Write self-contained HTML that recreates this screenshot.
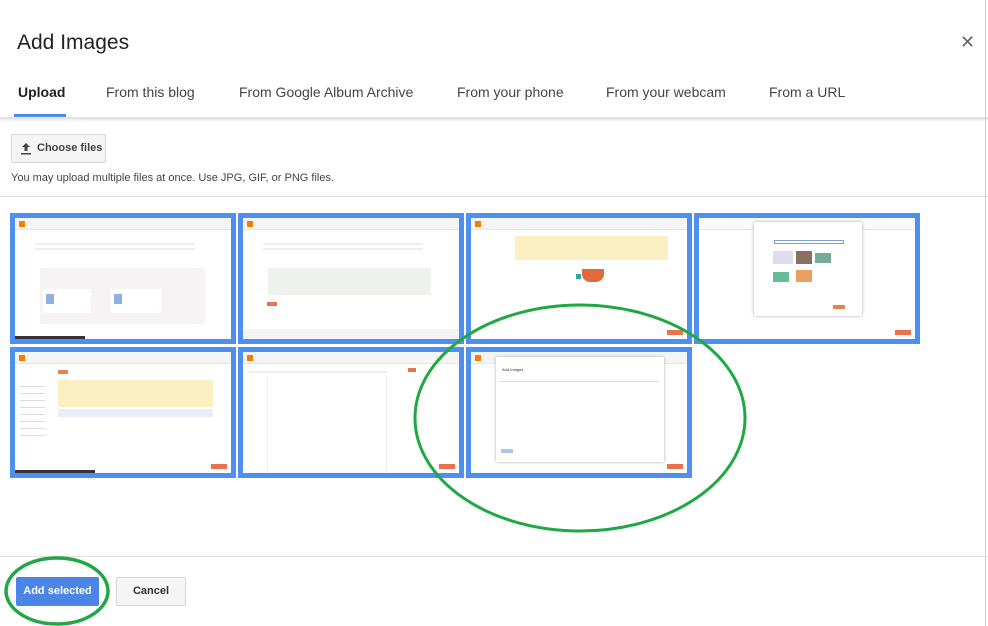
<!DOCTYPE html>
<html><head><style>
*{margin:0;padding:0;box-sizing:border-box}
body{width:988px;height:626px;background:#fff;font-family:"Liberation Sans",Arial,sans-serif;position:relative;overflow:hidden;color:#222}
.abs{position:absolute}
.title{left:17px;top:31px;font-size:21px;color:#222}
.x{left:960px;top:32px;font-size:18px;color:#666}
.tab{top:84px;font-size:14px;color:#444;white-space:nowrap}
.tile{position:absolute;width:226px;height:131px;background:#4f8ff0;padding:5px}
.in{width:100%;height:100%;background:#fff;position:relative;overflow:hidden}
.bar{position:absolute;left:0;top:0;right:0;height:12px;background:#f5f5f5;border-bottom:1px solid #e6e6e6}
.logo{position:absolute;left:4px;top:3px;width:6px;height:6px;background:#f57d00}
.line{position:absolute;height:2px;background:#ddd}
.or{position:absolute;width:16px;height:5px;background:#e8734e;right:4px;bottom:4px}
</style></head><body>
<div class="abs title">Add Images</div>
<div class="abs x">✕</div>
<div class="abs tab" style="left:18px;font-weight:bold;color:#222">Upload</div>
<div class="abs tab" style="left:106px">From this blog</div>
<div class="abs tab" style="left:239px">From Google Album Archive</div>
<div class="abs tab" style="left:457px">From your phone</div>
<div class="abs tab" style="left:606px">From your webcam</div>
<div class="abs tab" style="left:769px">From a URL</div>
<div class="abs" style="left:14px;top:114px;width:52px;height:3px;background:#4a86e8"></div>
<div class="abs" style="left:0;top:117px;width:988px;height:2px;background:#e3e3e3;box-shadow:0 1px 2px #ddd"></div>
<div class="abs" style="left:11px;top:134px;width:95px;height:29px;background:#f5f5f5;border:1px solid #d6d6d6;border-radius:2px;font-size:11px;font-weight:bold;color:#444;line-height:27px;padding-left:25px;white-space:nowrap">Choose files
<svg style="position:absolute;left:8px;top:7px" width="12" height="13" viewBox="0 0 12 13"><path d="M6 1L2 5h2.5v4h3V5H10z M1 11h10v1.5H1z" fill="#444"/></svg></div>
<div class="abs" style="left:11px;top:172px;font-size:11px;color:#444">You may upload multiple files at once. Use JPG, GIF, or PNG files.</div>
<div class="abs" style="left:0;top:196px;width:988px;height:1px;background:#e3e3e3"></div>
<div class="abs" style="left:985px;top:0;width:1px;height:626px;background:#ccc"></div>

<div class="tile" style="left:10px;top:213px"><div class="in"><div class="bar"><div class="logo"></div></div>
<div class="line" style="left:20px;top:25px;width:160px;background:#eee"></div><div class="line" style="left:20px;top:30px;width:160px;background:#eee"></div>
<div style="position:absolute;left:25px;top:50px;width:165px;height:56px;background:#f7f3f5"></div>
<div style="position:absolute;left:28px;top:71px;width:48px;height:24px;background:#fff"></div>
<div style="position:absolute;left:96px;top:71px;width:50px;height:24px;background:#fff"></div>
<div style="position:absolute;left:31px;top:76px;width:8px;height:10px;background:#8fb0e0"></div>
<div style="position:absolute;left:99px;top:76px;width:8px;height:10px;background:#8fb0e0"></div>
<div style="position:absolute;left:0;bottom:0;width:70px;height:3px;background:#333"></div></div></div>

<div class="tile" style="left:238px;top:213px"><div class="in"><div class="bar"><div class="logo"></div></div>
<div class="line" style="left:20px;top:25px;width:160px;background:#eee"></div><div class="line" style="left:20px;top:30px;width:160px;background:#eee"></div>
<div style="position:absolute;left:25px;top:50px;width:163px;height:27px;background:#eef2ec"></div>
<div style="position:absolute;left:24px;top:84px;width:10px;height:4px;background:#e8734e"></div>
<div style="position:absolute;left:0;bottom:0;right:0;height:10px;background:#f4f4f4"></div></div></div>

<div class="tile" style="left:466px;top:213px"><div class="in"><div class="bar"><div class="logo"></div></div>
<div style="position:absolute;left:44px;top:18px;width:153px;height:24px;background:#fbf0c2"></div>
<div style="position:absolute;left:111px;top:51px;width:22px;height:13px;background:#e06a3c;border-radius:0 0 8px 8px"></div>
<div style="position:absolute;left:105px;top:56px;width:5px;height:5px;background:#3aa"></div>
<div class="or"></div></div></div>

<div class="tile" style="left:694px;top:213px"><div class="in"><div class="bar" style="background:#fafafa"></div>
<div style="position:absolute;left:55px;top:4px;width:108px;height:94px;background:#fff;box-shadow:0 0 3px #aaa"></div>
<div style="position:absolute;left:75px;top:22px;width:70px;height:4px;border:1px solid #7aa0e0"></div>
<div style="position:absolute;left:74px;top:33px;width:20px;height:13px;background:#dde"></div>
<div style="position:absolute;left:97px;top:33px;width:16px;height:13px;background:#8a7060"></div>
<div style="position:absolute;left:116px;top:35px;width:16px;height:10px;background:#7a9"></div>
<div style="position:absolute;left:74px;top:54px;width:16px;height:10px;background:#6b9"></div>
<div style="position:absolute;left:97px;top:52px;width:16px;height:12px;background:#e9a060"></div>
<div style="position:absolute;left:134px;top:87px;width:12px;height:4px;background:#e8834e"></div>
<div class="or"></div></div></div>

<div class="tile" style="left:10px;top:347px"><div class="in"><div class="bar"><div class="logo"></div></div>
<div style="position:absolute;left:43px;top:18px;width:10px;height:4px;background:#e8834e"></div>
<div style="position:absolute;left:43px;top:28px;width:155px;height:27px;background:#fbf0c2"></div>
<div style="position:absolute;left:43px;top:57px;width:155px;height:8px;background:#e8eef8"></div>
<div style="position:absolute;left:5px;top:30px;width:25px;height:60px;background:repeating-linear-gradient(#fff 0 4px,#ddd 4px 5px,#fff 5px 7px)"></div>
<div style="position:absolute;left:0;bottom:0;width:80px;height:3px;background:#333"></div><div class="or"></div></div></div>

<div class="tile" style="left:238px;top:347px"><div class="in"><div class="bar"><div class="logo"></div></div>
<div class="line" style="left:4px;top:19px;width:140px;background:#eee"></div>
<div style="position:absolute;left:24px;top:23px;width:120px;height:98px;border-left:1px solid #eee;border-right:1px solid #eee"></div>
<div style="position:absolute;left:165px;top:16px;width:8px;height:4px;background:#e8734e"></div>
<div class="or"></div></div></div>

<div class="tile" style="left:466px;top:347px"><div class="in"><div class="bar"><div class="logo"></div></div>
<div style="position:absolute;left:25px;top:5px;width:168px;height:105px;background:#fff;box-shadow:0 0 3px #aaa"></div>
<div style="position:absolute;left:31px;top:15px;font-size:4px;color:#333">Add Images</div>
<div class="line" style="left:28px;top:29px;width:160px;height:1px"></div>
<div style="position:absolute;left:30px;top:97px;width:12px;height:4px;background:#a9c4f0"></div>
<div class="or"></div></div></div>

<div class="abs" style="left:0;top:556px;width:988px;height:1px;background:#e3e3e3"></div>
<div class="abs" style="left:16px;top:577px;width:83px;height:29px;background:#4a86e8;border-radius:2px;color:#fff;font-size:11px;font-weight:bold;text-align:center;line-height:29px">Add selected</div>
<div class="abs" style="left:116px;top:577px;width:70px;height:29px;background:#f5f5f5;border:1px solid #d6d6d6;border-radius:2px;color:#333;font-size:11px;font-weight:bold;text-align:center;line-height:27px">Cancel</div>

<svg class="abs" style="left:0;top:0" width="988" height="626">
<ellipse cx="580" cy="418" rx="165" ry="113" fill="none" stroke="#1fa843" stroke-width="3"/>
<ellipse cx="57" cy="591" rx="51" ry="33" fill="none" stroke="#1fa843" stroke-width="3.5"/>
</svg>
</body></html>
